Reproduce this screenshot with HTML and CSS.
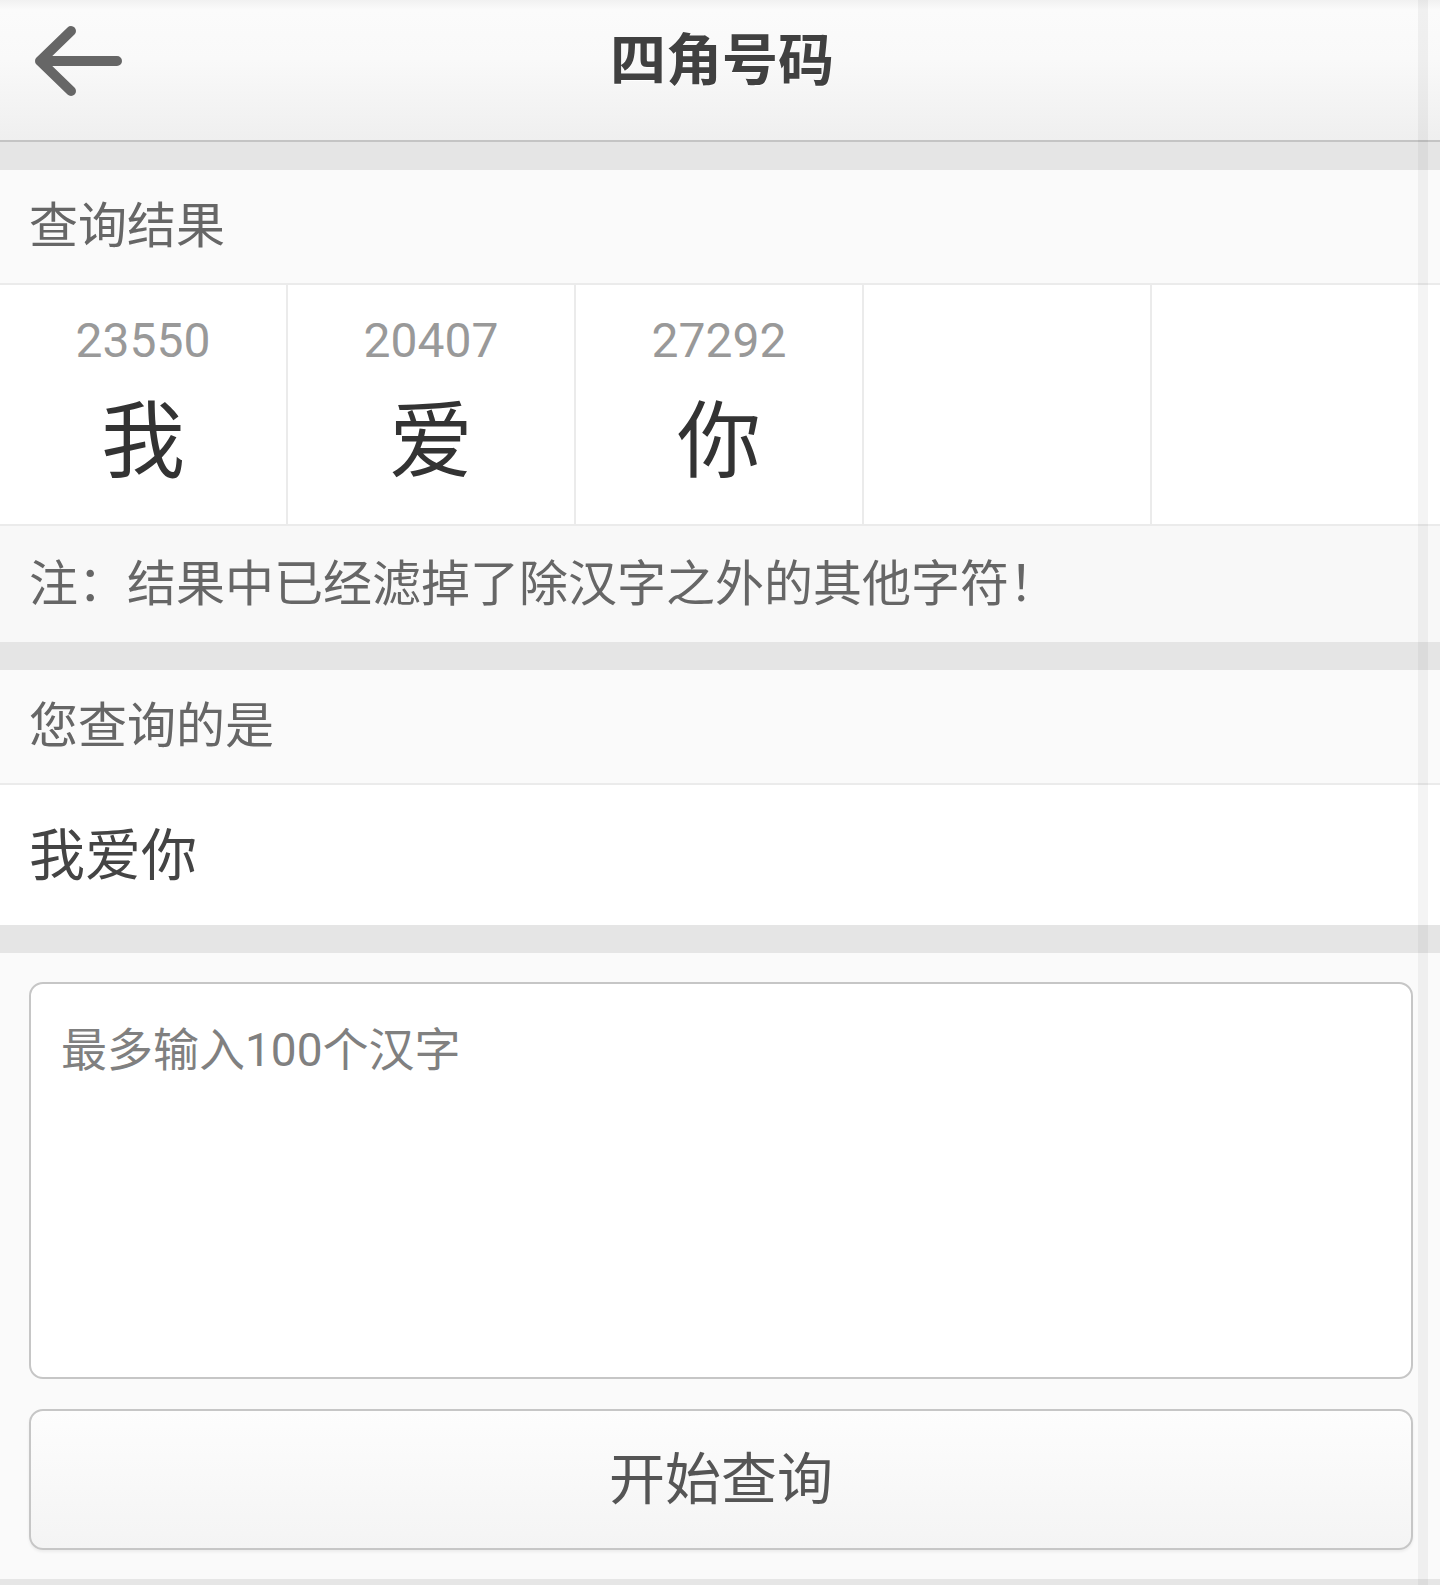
FILE: index.html
```html
<!DOCTYPE html>
<html lang="zh-CN">
<head>
<meta charset="utf-8">
<title>四角号码</title>
<link rel="stylesheet" href="styles.css">
</head>
<body>
<div class="page">
  <header class="topbar">
    <div class="topbar-inner">
      <a class="back" href="#" aria-label="返回">
        <svg width="100" height="80" viewBox="0 0 100 80">
          <path d="M40 10 L9 40 L40 70 M9 40 L86 40" fill="none" stroke="#666" stroke-width="10" stroke-linecap="round" stroke-linejoin="round"/>
        </svg>
      </a>
      <h1 class="title">四角号码</h1>
    </div>
  </header>

  <div class="band"></div>

  <div class="label-row">查询结果</div>
  <div class="result-grid">
    <div class="cell"><div class="code">23550</div><div class="char">我</div></div>
    <div class="cell"><div class="code">20407</div><div class="char">爱</div></div>
    <div class="cell"><div class="code">27292</div><div class="char">你</div></div>
    <div class="cell"></div>
    <div class="cell"></div>
  </div>
  <div class="note-row">注：结果中已经滤掉了除汉字之外的其他字符！</div>

  <div class="band"></div>

  <div class="label-row">您查询的是</div>
  <div class="value-row">我爱你</div>

  <div class="band"></div>

  <form class="query-form">
    <textarea class="input" placeholder="最多输入100个汉字"></textarea>
    <button type="button" class="submit">开始查询</button>
  </form>
  <div class="bottom-band"></div>
</div>
<div class="scroll-indicator"></div>
</body>
</html>
```
FILE: styles.css
```css
html, body {
  margin: 0;
  padding: 0;
}
body {
  background: #fafafa;
  font-family: "Roboto", "Noto Sans CJK SC", sans-serif;
  color: #444;
  width: 1440px;
  height: 1585px;
  overflow: hidden;
  position: relative;
}
.page {
  display: flex;
  flex-direction: column;
  width: 1440px;
}

/* header */
.topbar {
  height: 140px;
  border-bottom: 2px solid #c4c4c4;
  background: linear-gradient(to bottom, #f1f1f1 0px, #fbfbfb 10px, #f9f9f9 60px, #efefef 140px);
  box-sizing: content-box;
}
.topbar-inner {
  position: relative;
  height: 112px;
  display: flex;
  align-items: center;
  justify-content: center;
}
.back {
  position: absolute;
  left: 31px;
  top: 21px;
  width: 100px;
  height: 80px;
  display: block;
}
.back svg { display: block; }
.title {
  margin: 0;
  font-family: "Noto Sans CJK SC", sans-serif;
  font-weight: 700;
  font-size: 56px;
  line-height: 60px;
  color: #404040;
  text-shadow: 0 1px 0 #fff;
  padding-left: 4px;
}

.band {
  height: 28px;
  background: #e5e5e5;
}

.label-row {
  height: 113px;
  box-sizing: border-box;
  padding-bottom: 10px;
  background: #fafafa;
  display: flex;
  align-items: center;
  padding-left: 29px;
  font-family: "Noto Sans CJK SC", sans-serif;
  font-size: 49px;
  color: #666;
  border-bottom: 2px solid #ebebeb;
  box-sizing: content-box;
  height: 103px;
}

.result-grid {
  display: grid;
  grid-template-columns: repeat(5, 1fr);
  height: 239px;
  background: #fff;
  border-bottom: 2px solid #ebebeb;
}
.cell {
  border-right: 2px solid #ebebeb;
  display: flex;
  flex-direction: column;
  align-items: center;
  padding-top: 28px;
}
.cell:last-child { border-right: none; }
.code {
  font-family: "Roboto", sans-serif;
  font-size: 48px;
  line-height: 56px;
  color: #999;
}
.char {
  font-family: "Noto Sans CJK SC", sans-serif;
  font-size: 84px;
  line-height: 100px;
  margin-top: 16px;
  color: #333;
}

.note-row {
  height: 106px;
  padding-bottom: 10px;
  background: #f8f8f8;
  display: flex;
  align-items: center;
  padding-left: 29px;
  font-family: "Noto Sans CJK SC", sans-serif;
  font-size: 49px;
  color: #666;
}

.value-row {
  height: 130px;
  padding-bottom: 10px;
  background: #fff;
  display: flex;
  align-items: center;
  padding-left: 29px;
  font-family: "Noto Sans CJK SC", sans-serif;
  font-size: 56px;
  color: #444;
}

.query-form {
  display: flex;
  flex-direction: column;
  gap: 30px;
  padding: 29px 27px 29px 29px;
  background: #fafafa;
  margin: 0;
}
.input {
  display: block;
  box-sizing: border-box;
  width: 100%;
  height: 397px;
  border: 2px solid #c6c6c6;
  border-radius: 14px;
  background: #fff;
  padding: 38px 31px 30px 30px;
  resize: none;
  font-family: "Roboto", "Noto Sans CJK SC", sans-serif;
  font-size: 46px;
  line-height: 56px;
  color: #444;
  outline: none;
}
.input::placeholder {
  color: #808080;
}
.submit {
  display: block;
  box-sizing: border-box;
  width: 100%;
  height: 141px;
  border: 2px solid #c6c6c6;
  border-radius: 14px;
  background: linear-gradient(to bottom, #fdfdfd, #f4f4f4);
  box-shadow: 0 2px 3px rgba(0,0,0,0.06);
  font-family: "Noto Sans CJK SC", sans-serif;
  font-size: 56px;
  color: #555;
  padding: 0 0 10px 0;
  cursor: pointer;
}

.bottom-band {
  height: 10px;
  background: #e6e6e6;
}

.scroll-indicator {
  position: absolute;
  top: 0;
  left: 1418px;
  width: 10px;
  height: 1585px;
  background: rgba(0,0,0,0.045);
  pointer-events: none;
}
```
